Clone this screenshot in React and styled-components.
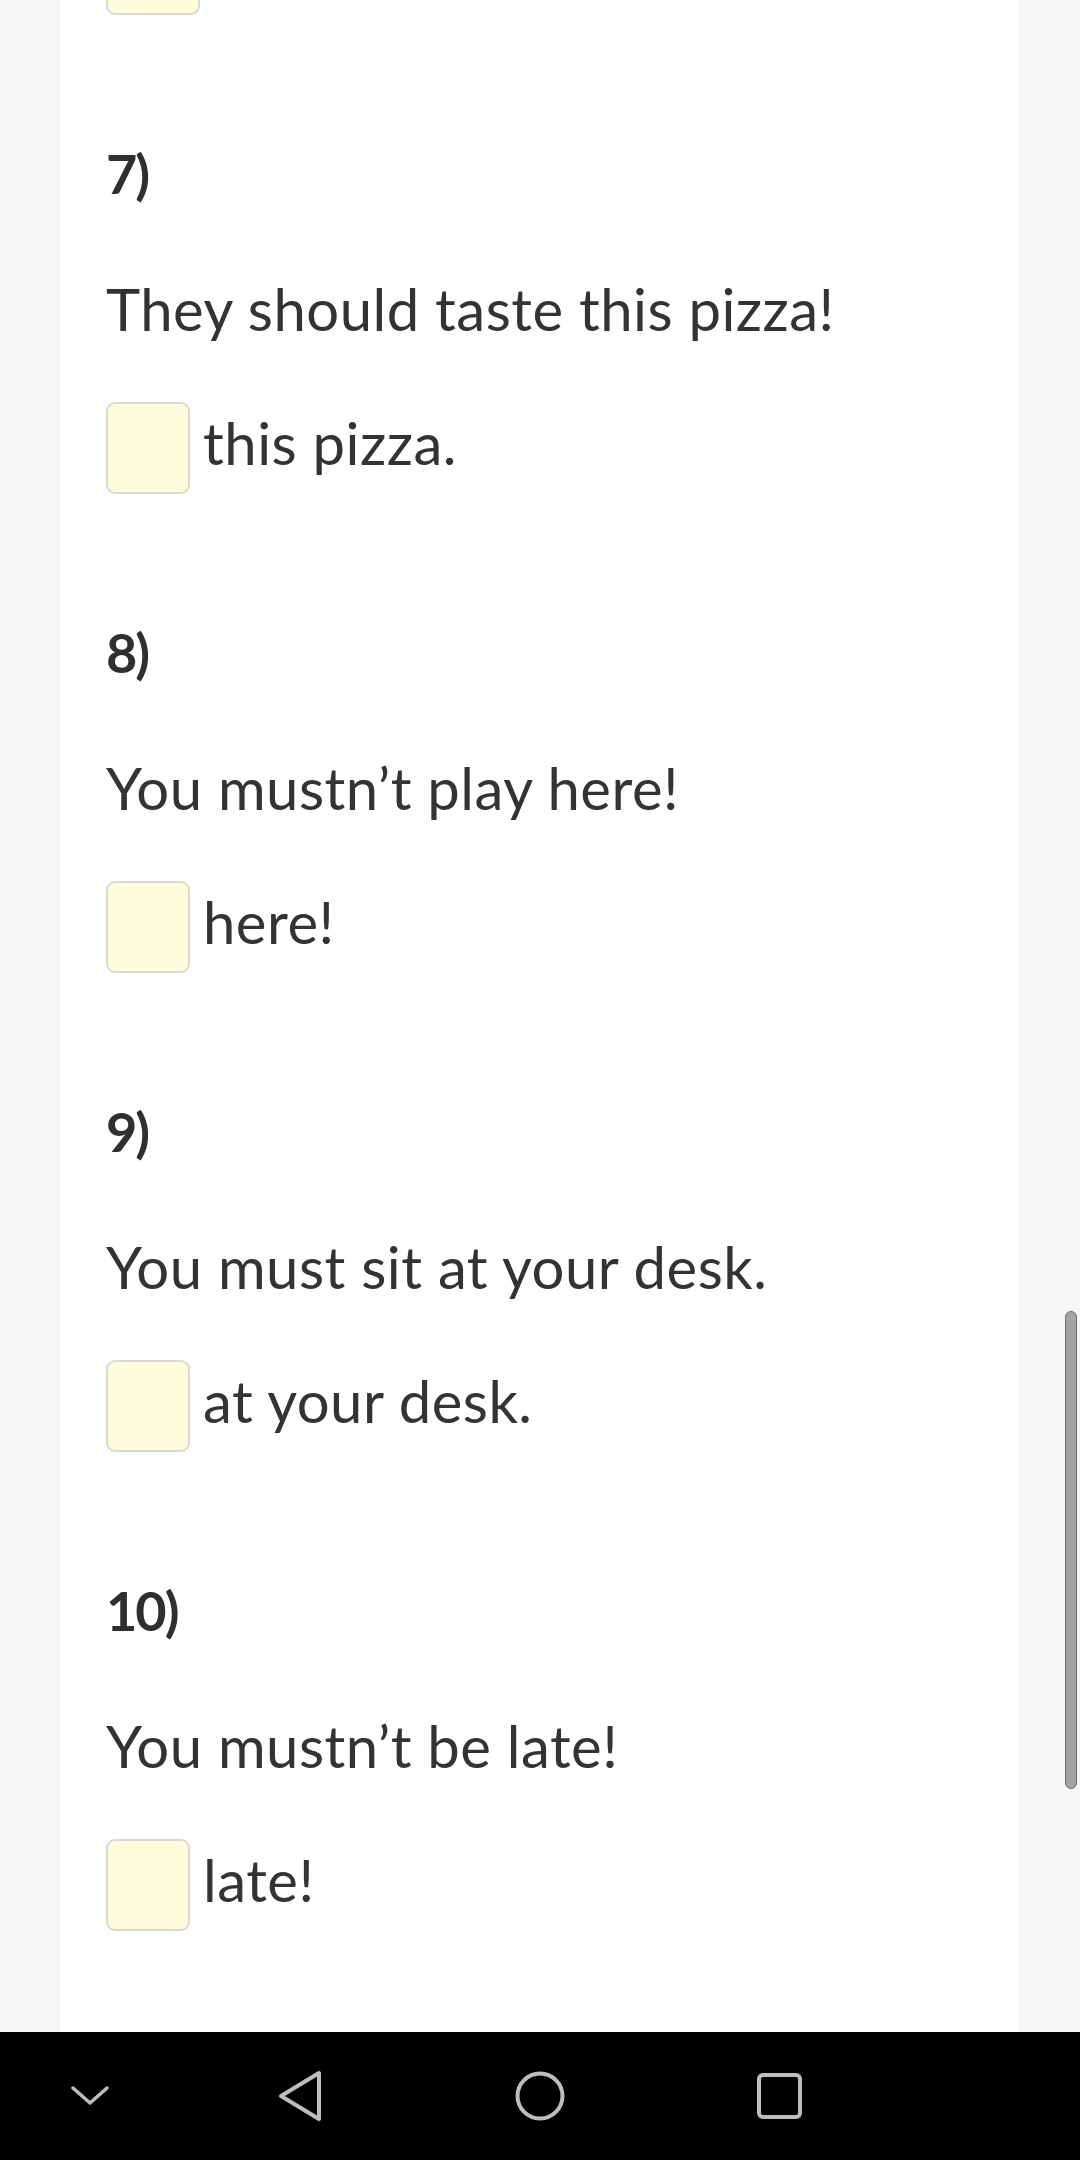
import React from "react";
import styled, { createGlobalStyle } from "styled-components";

const items = [
  { n: "7)", text: "They should taste this pizza!", tail: "this pizza." },
  { n: "8)", text: "You mustn’t play here!", tail: "here!" },
  { n: "9)", text: "You must sit at your desk.", tail: "at your desk." },
  { n: "10)", text: "You mustn’t be late!", tail: "late!" },
];

const GlobalStyle = createGlobalStyle`
  html, body {
    margin: 0;
    padding: 0;
    background: #f5f6f8;
  }
  body {
    font-family: Lato, "Open Sans", sans-serif;
    color: #333333;
  }
`;

function App() {
  return (
    <Screen>
      <GlobalStyle />
      <Page>
        <Card>
          <PrevRow>
            <AnswerBox wide />
          </PrevRow>
          {items.map((item) => (
            <Task key={item.n}>
              <Number>{item.n}</Number>
              <Sentence>{item.text}</Sentence>
              <AnswerRow>
                <AnswerBox />
                <Tail>{item.tail}</Tail>
              </AnswerRow>
            </Task>
          ))}
        </Card>
        <Scrollbar />
      </Page>
      <NavBar>
        <NavButton>
          <svg width="40" height="24" viewBox="0 0 40 24">
            <path
              d="M3 4 L20 19 L37 4"
              fill="none"
              stroke="#bdbdbd"
              strokeWidth="3.5"
              strokeLinecap="round"
              strokeLinejoin="round"
            />
          </svg>
        </NavButton>
        <NavButton>
          <svg width="46" height="52" viewBox="0 0 46 52">
            <path
              d="M42 3 L42 49 L4 26 Z"
              fill="none"
              stroke="#bdbdbd"
              strokeWidth="4"
              strokeLinejoin="round"
            />
          </svg>
        </NavButton>
        <NavButton>
          <svg width="52" height="52" viewBox="0 0 52 52">
            <circle cx="26" cy="26" r="22.5" fill="none" stroke="#bdbdbd" strokeWidth="4" />
          </svg>
        </NavButton>
        <NavButton>
          <svg width="48" height="48" viewBox="0 0 48 48">
            <rect
              x="3"
              y="3"
              width="41"
              height="42"
              rx="4"
              fill="none"
              stroke="#bdbdbd"
              strokeWidth="4"
            />
          </svg>
        </NavButton>
      </NavBar>
    </Screen>
  );
}

export default App;

const Screen = styled.div`
  width: 1080px;
  height: 2160px;
  display: flex;
  flex-direction: column;
  overflow: hidden;
  background: #f5f6f8;
`;

const Page = styled.div`
  position: relative;
  flex: 1;
  overflow: hidden;
  padding: 0 61px 0 60px;
`;

const Card = styled.div`
  background: #ffffff;
  height: 100%;
  padding: 0 46px;
  box-sizing: border-box;
  display: flex;
  flex-direction: column;
`;

const PrevRow = styled.div`
  margin-top: -77px;
  display: flex;
`;

const Task = styled.div`
  display: flex;
  flex-direction: column;
  padding-top: 124px;
`;

const Number = styled.div`
  font-weight: 700;
  font-size: 54px;
  line-height: 70px;
  letter-spacing: -2px;
  color: #2f2f2f;
`;

const Sentence = styled.div`
  margin-top: 65px;
  font-size: 58px;
  line-height: 70px;
  letter-spacing: 0.5px;
  color: #333333;
`;

const AnswerRow = styled.div`
  margin-top: 58px;
  display: flex;
  align-items: center;
  gap: 13px;
`;

const AnswerBox = styled.div`
  width: ${(p) => (p.wide ? "94px" : "84px")};
  height: 92px;
  box-sizing: border-box;
  border: 2px solid #dad9d1;
  border-radius: 9px;
  background: #fffcdd;
  flex-shrink: 0;
`;

const Tail = styled.span`
  font-size: 58px;
  line-height: 70px;
  letter-spacing: 0.5px;
  padding-bottom: 10px;
  color: #333333;
`;

const Scrollbar = styled.div`
  position: absolute;
  right: 3px;
  top: 1311px;
  width: 10px;
  height: 476px;
  border-radius: 6px;
  background: #a3a3a3;
  border: 1.5px solid #6f6f6f;
`;

const NavBar = styled.div`
  height: 128px;
  flex-shrink: 0;
  background: #000000;
  display: grid;
  grid-template-columns: 180px 240px 240px 240px 180px;
  align-items: center;
  justify-items: center;
`;

const NavButton = styled.div`
  display: flex;
  align-items: center;
  justify-content: center;
`;
